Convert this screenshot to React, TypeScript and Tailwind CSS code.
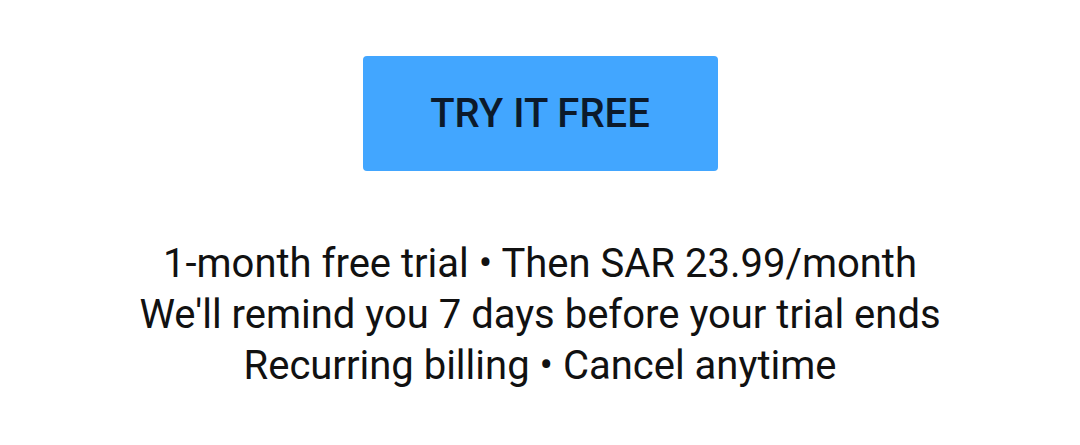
import React from "react";

const App = () => {
    const lines = [
        "1-month free trial • Then SAR 23.99/month",
        "We'll remind you 7 days before your trial ends",
        "Recurring billing • Cancel anytime",
    ];

    return (
        <div
            className="w-[1080px] h-[445px] bg-white flex flex-col items-center pt-[56px]"
            style={{ fontFamily: "Roboto, 'Noto Sans', sans-serif" }}
        >
            <button className="w-[355px] h-[115px] rounded-[4px] bg-[#42a6ff] flex items-center justify-center">
                <span className="text-[40px] font-medium text-[#0c1a2b] leading-none">TRY IT FREE</span>
            </button>
            <div className="mt-[67px] flex flex-col items-center text-[40px] leading-[51px] text-[#111111]">
                {lines.map((line, i) => (
                    <p key={i}>{line}</p>
                ))}
            </div>
        </div>
    );
};

export default App;
